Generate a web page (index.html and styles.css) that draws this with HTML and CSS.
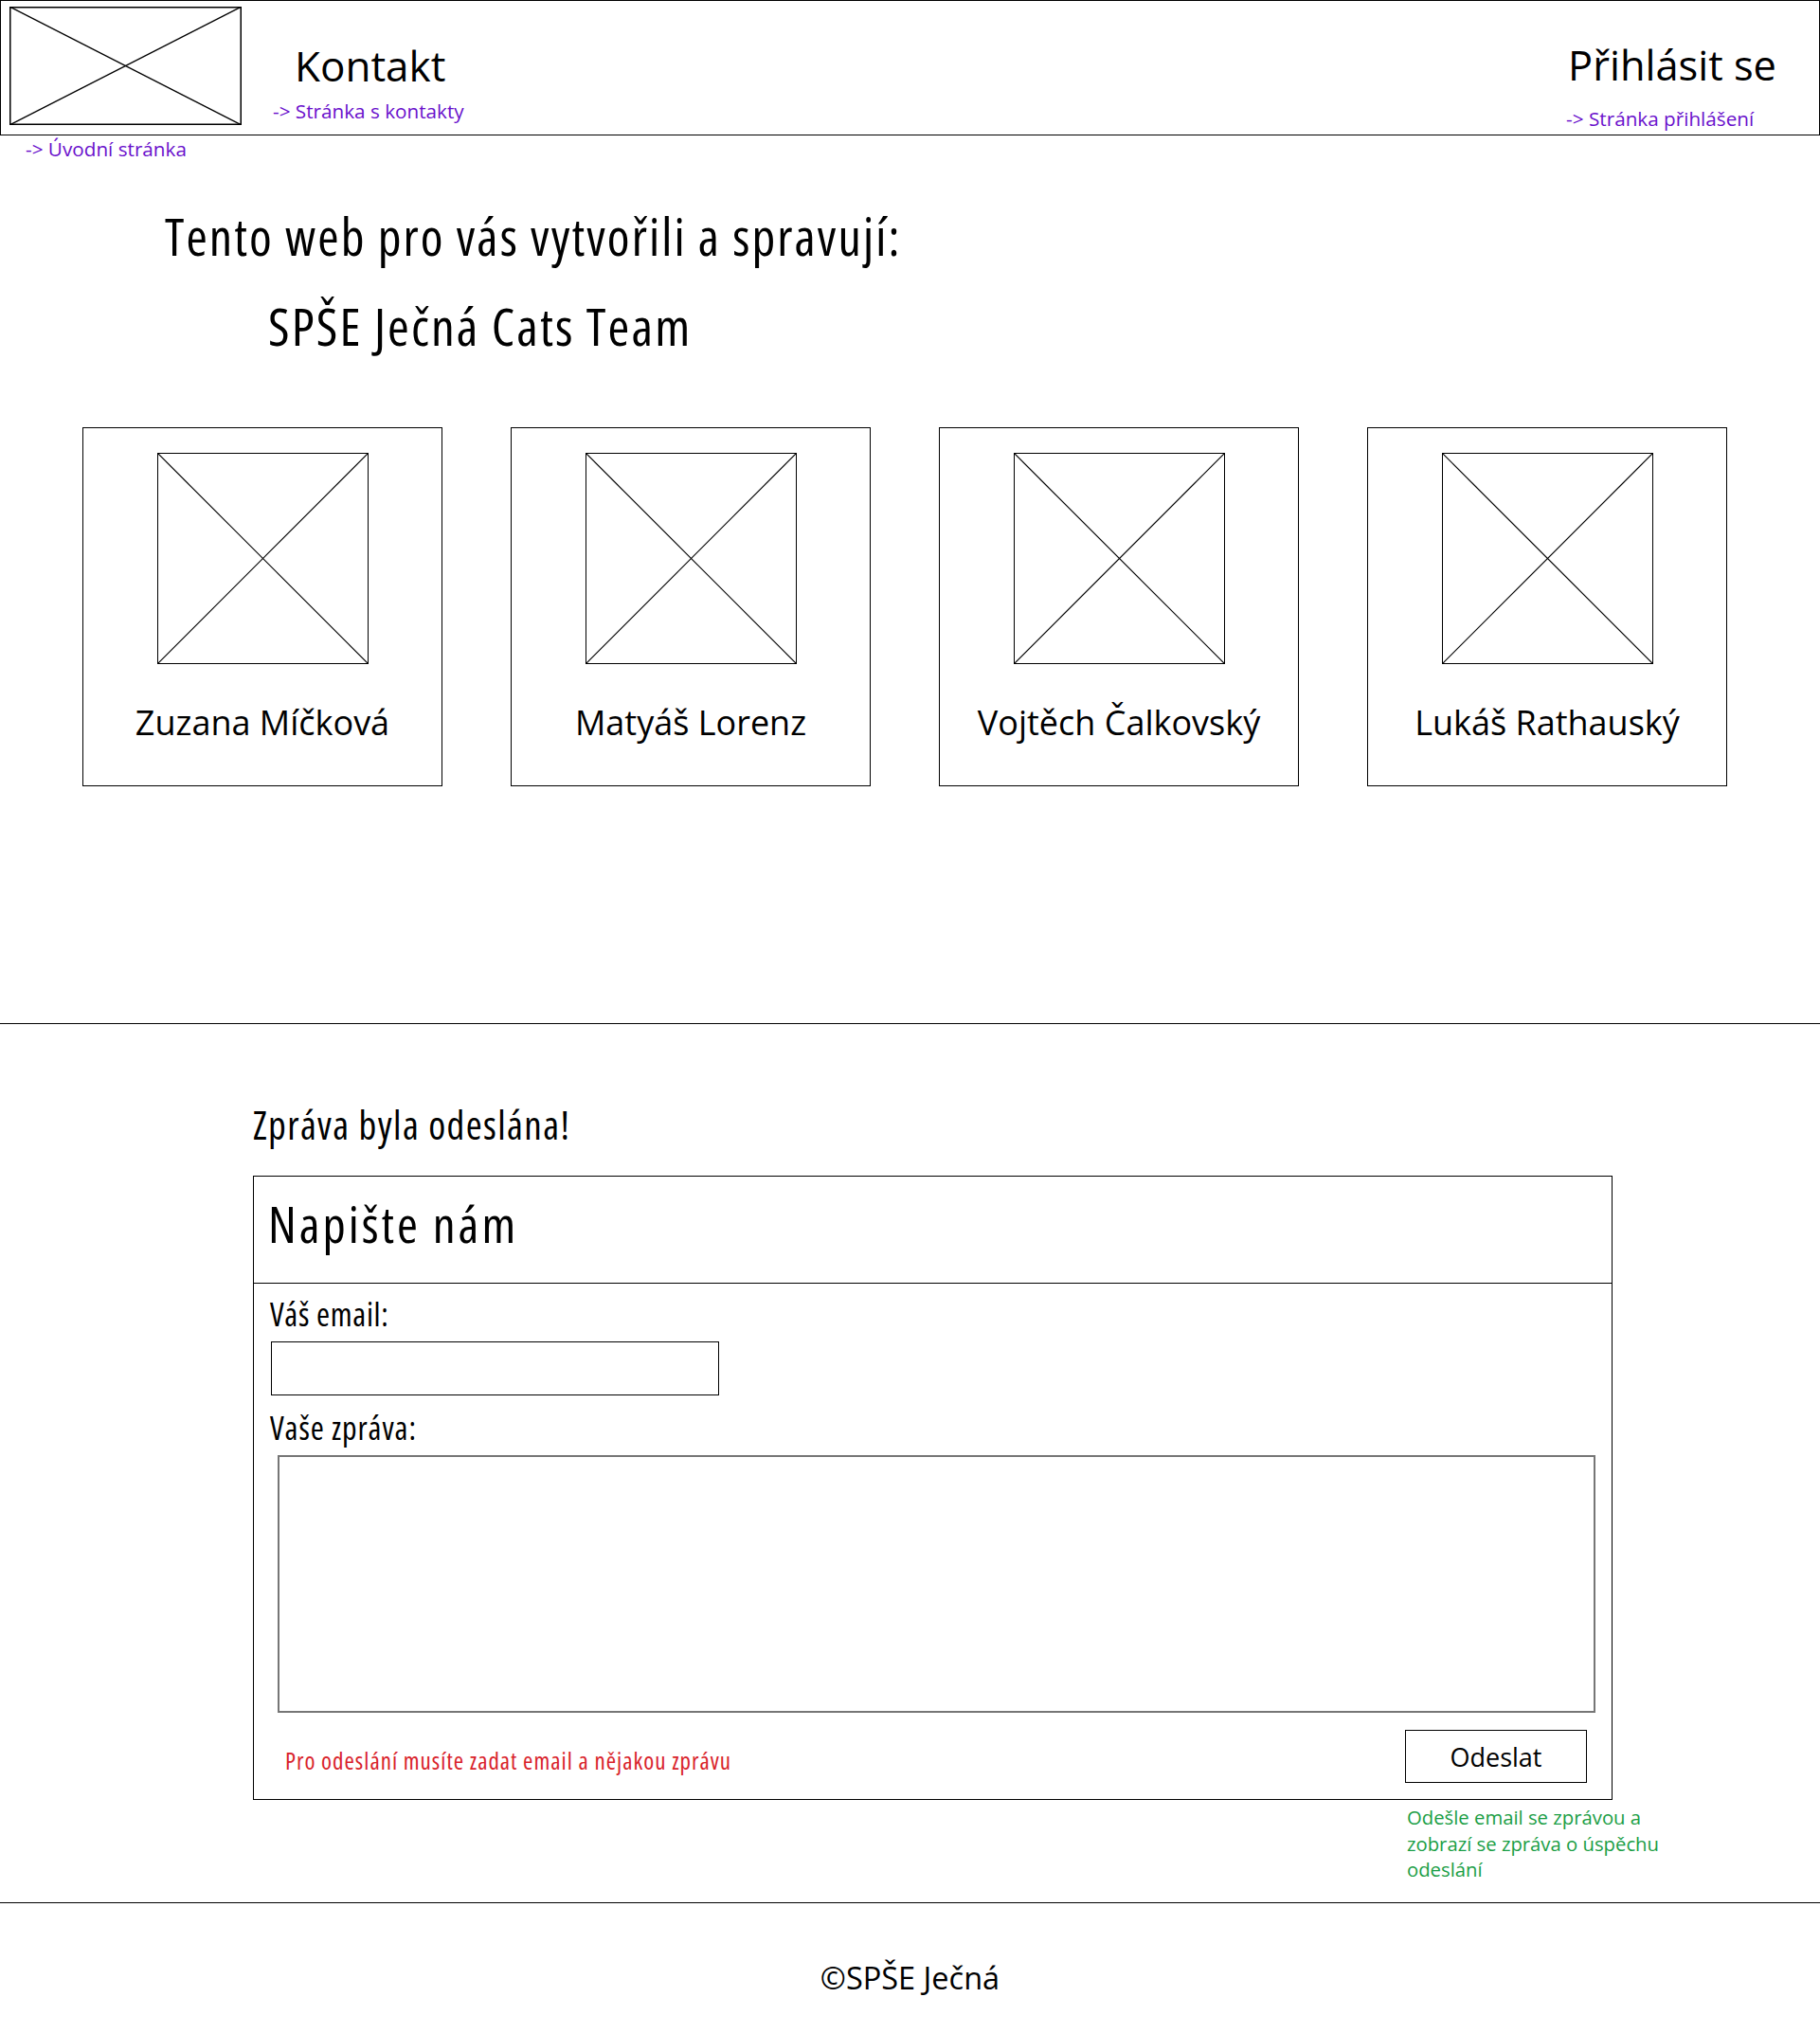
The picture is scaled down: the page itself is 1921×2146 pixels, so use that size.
FILE: index.html
```html
<!DOCTYPE html>
<html lang="cs">
<head>
<meta charset="utf-8">
<title>Kontakt</title>
<link rel="stylesheet" href="styles.css">
</head>
<body>
<header class="topbar">
  <div class="logo">
    <svg class="ph" viewBox="0 0 100 100" preserveAspectRatio="none">
      <rect x="0" y="0" width="100" height="100" fill="none" stroke="#000" stroke-width="3" vector-effect="non-scaling-stroke"/>
      <line x1="0" y1="0" x2="100" y2="100" stroke="#000" stroke-width="1.4" vector-effect="non-scaling-stroke"/>
      <line x1="100" y1="0" x2="0" y2="100" stroke="#000" stroke-width="1.4" vector-effect="non-scaling-stroke"/>
    </svg>
  </div>
  <div class="nav-item nav-kontakt">
    <div class="nav-title">Kontakt</div>
    <div class="note-link">-&gt; Stránka s kontakty</div>
  </div>
  <div class="nav-item nav-login">
    <div class="nav-title login-title">Přihlásit se</div>
    <div class="note-link login-link">-&gt; Stránka přihlášení</div>
  </div>
</header>
<div class="note-link home-link">-&gt; Úvodní stránka</div>

<main class="team">
  <h1 class="intro">Tento web pro vás vytvořili a spravují:</h1>
  <h2 class="team-name">SPŠE Ječná Cats Team</h2>
  <div class="cards">
    <div class="card">
      <svg class="photo" viewBox="0 0 100 100" preserveAspectRatio="none">
        <rect x="0" y="0" width="100" height="100" fill="none" stroke="#000" stroke-width="2" vector-effect="non-scaling-stroke"/>
        <line x1="0" y1="0" x2="100" y2="100" stroke="#000" stroke-width="1.2" vector-effect="non-scaling-stroke"/>
        <line x1="100" y1="0" x2="0" y2="100" stroke="#000" stroke-width="1.2" vector-effect="non-scaling-stroke"/>
      </svg>
      <div class="person">Zuzana Míčková</div>
    </div>
    <div class="card">
      <svg class="photo" viewBox="0 0 100 100" preserveAspectRatio="none">
        <rect x="0" y="0" width="100" height="100" fill="none" stroke="#000" stroke-width="2" vector-effect="non-scaling-stroke"/>
        <line x1="0" y1="0" x2="100" y2="100" stroke="#000" stroke-width="1.2" vector-effect="non-scaling-stroke"/>
        <line x1="100" y1="0" x2="0" y2="100" stroke="#000" stroke-width="1.2" vector-effect="non-scaling-stroke"/>
      </svg>
      <div class="person">Matyáš Lorenz</div>
    </div>
    <div class="card">
      <svg class="photo" viewBox="0 0 100 100" preserveAspectRatio="none">
        <rect x="0" y="0" width="100" height="100" fill="none" stroke="#000" stroke-width="2" vector-effect="non-scaling-stroke"/>
        <line x1="0" y1="0" x2="100" y2="100" stroke="#000" stroke-width="1.2" vector-effect="non-scaling-stroke"/>
        <line x1="100" y1="0" x2="0" y2="100" stroke="#000" stroke-width="1.2" vector-effect="non-scaling-stroke"/>
      </svg>
      <div class="person">Vojtěch Čalkovský</div>
    </div>
    <div class="card">
      <svg class="photo" viewBox="0 0 100 100" preserveAspectRatio="none">
        <rect x="0" y="0" width="100" height="100" fill="none" stroke="#000" stroke-width="2" vector-effect="non-scaling-stroke"/>
        <line x1="0" y1="0" x2="100" y2="100" stroke="#000" stroke-width="1.2" vector-effect="non-scaling-stroke"/>
        <line x1="100" y1="0" x2="0" y2="100" stroke="#000" stroke-width="1.2" vector-effect="non-scaling-stroke"/>
      </svg>
      <div class="person">Lukáš Rathauský</div>
    </div>
  </div>
</main>

<hr class="divider divider-mid">

<section class="contact">
  <p class="sent">Zpráva byla odeslána!</p>
  <form class="form-box">
    <div class="form-head">Napište nám</div>
    <div class="form-body">
      <label class="field-label email-label" for="email">Váš email:</label>
      <input class="email-input" id="email" type="text">
      <label class="field-label msg-label" for="msg">Vaše zpráva:</label>
      <textarea class="msg-input" id="msg"></textarea>
      <div class="form-foot">
        <span class="error-note">Pro odeslání musíte zadat email a nějakou zprávu</span>
        <button class="send-btn" type="button">Odeslat</button>
      </div>
    </div>
  </form>
  <p class="green-note">Odešle email se zprávou a<br>zobrazí se zpráva o úspěchu<br>odeslání</p>
</section>

<hr class="divider divider-foot">

<footer class="footer">©SPŠE Ječná</footer>
</body>
</html>
```

FILE: styles.css
```css
* { box-sizing: border-box; }

html, body {
  margin: 0;
  padding: 0;
  background: #fff;
  color: #000;
  font-family: "Open Sans", "Noto Sans", "DejaVu Sans", sans-serif;
}

body {
  width: 1921px;
  min-height: 2146px;
}

/* ---------- header ---------- */
.topbar {
  display: flex;
  align-items: flex-start;
  height: 143px;
  border: 1px solid #000;
}

.logo {
  width: 245px;
  height: 125px;
  margin: 6px 0 0 9px;
  flex: none;
}

.ph, .photo {
  display: block;
  width: 100%;
  height: 100%;
}

.nav-item {
  display: flex;
  flex-direction: column;
  padding-top: 46px;
}

.nav-kontakt {
  margin-left: 56px;
}

.nav-login {
  margin-left: auto;
  margin-right: 45px;
}

.nav-title {
  font-size: 44px;
  line-height: 44px;
}

.login-title {
  font-size: 43.4px;
}

.note-link {
  color: #6a10cc;
  font-size: 20.7px;
  line-height: 20px;
}

.nav-kontakt .note-link {
  margin-top: 16px;
  margin-left: -23px;
}

.login-link {
  margin-top: 24px;
  margin-left: -2px;
}

.home-link {
  margin: 4px 0 0 27px;
}

/* ---------- team ---------- */
.intro {
  margin: 57px 0 0 174px;
  font-weight: 400;
  font-size: 54px;
  line-height: 50px;
  font-stretch: 75%;
  letter-spacing: 2.1px;
}

.team-name {
  margin: 44px 0 0 283px;
  font-weight: 400;
  font-size: 55px;
  line-height: 52px;
  font-stretch: 75%;
  letter-spacing: 2.1px;
}

.cards {
  display: flex;
  gap: 72px;
  margin-top: 81px;
  padding-left: 87px;
}

.card {
  width: 380px;
  height: 379px;
  border: 1px solid #000;
  display: flex;
  flex-direction: column;
  align-items: center;
  padding-top: 26px;
}

.photo {
  width: 223px;
  height: 223px;
  flex: none;
}

.person {
  margin-top: 44px;
  font-size: 36px;
  line-height: 36px;
  white-space: nowrap;
}

/* ---------- dividers ---------- */
.divider {
  border: 0;
  border-top: 1px solid #000;
  margin: 0;
  height: 0;
}

.divider-mid {
  margin-top: 250px;
}

/* ---------- contact form ---------- */
.contact {
  padding-left: 267px;
}

.sent {
  margin: 87px 0 0 0;
  font-size: 41px;
  line-height: 38px;
  font-stretch: 75%;
  letter-spacing: 1.4px;
}

.form-box {
  width: 1435px;
  height: 659px;
  margin-top: 35px;
  border: 1px solid #000;
  display: flex;
  flex-direction: column;
}

.form-head {
  height: 113px;
  border-bottom: 1px solid #000;
  padding: 25px 0 0 15px;
  font-size: 53px;
  line-height: 50px;
  font-stretch: 75%;
  letter-spacing: 3px;
}

.form-body {
  display: flex;
  flex-direction: column;
  align-items: flex-start;
  padding: 16px 0 0 17px;
}

.field-label {
  font-size: 34px;
  line-height: 32px;
  font-stretch: 75%;
}

.email-label {
  letter-spacing: 0.65px;
}

.email-input {
  width: 473px;
  height: 57px;
  margin: 13px 0 0 1px;
  border: 1px solid #000;
  border-radius: 0;
  background: #fff;
  font: inherit;
  padding: 0;
}

.msg-label {
  margin-top: 18px;
  letter-spacing: 0.9px;
}

.msg-input {
  width: 1391px;
  height: 272px;
  margin: 13px 0 0 8px;
  border: 2px solid #767676;
  border-radius: 0;
  resize: none;
  font: inherit;
  padding: 0;
  background: #fff;
}

.form-foot {
  display: flex;
  align-items: flex-end;
  justify-content: space-between;
  width: 1390px;
  margin-top: 18px;
}

.error-note {
  color: #d9232b;
  font-size: 25px;
  line-height: 24px;
  font-stretch: 75%;
  letter-spacing: 1px;
  margin: 0 0 12px 16px;
}

.send-btn {
  width: 192px;
  height: 56px;
  border: 1px solid #000;
  border-radius: 0;
  background: #fff;
  color: #000;
  font-family: "Open Sans", "Noto Sans", sans-serif;
  font-size: 27px;
  line-height: 1;
  padding: 0;
}

.green-note {
  margin: 5px 0 0 1218px;
  color: #1a9e45;
  font-size: 20.3px;
  line-height: 27.5px;
}

.divider-foot {
  margin-top: 20px;
}

.footer {
  margin-top: 63px;
  text-align: center;
  font-size: 32.5px;
  line-height: 31px;
}
```
